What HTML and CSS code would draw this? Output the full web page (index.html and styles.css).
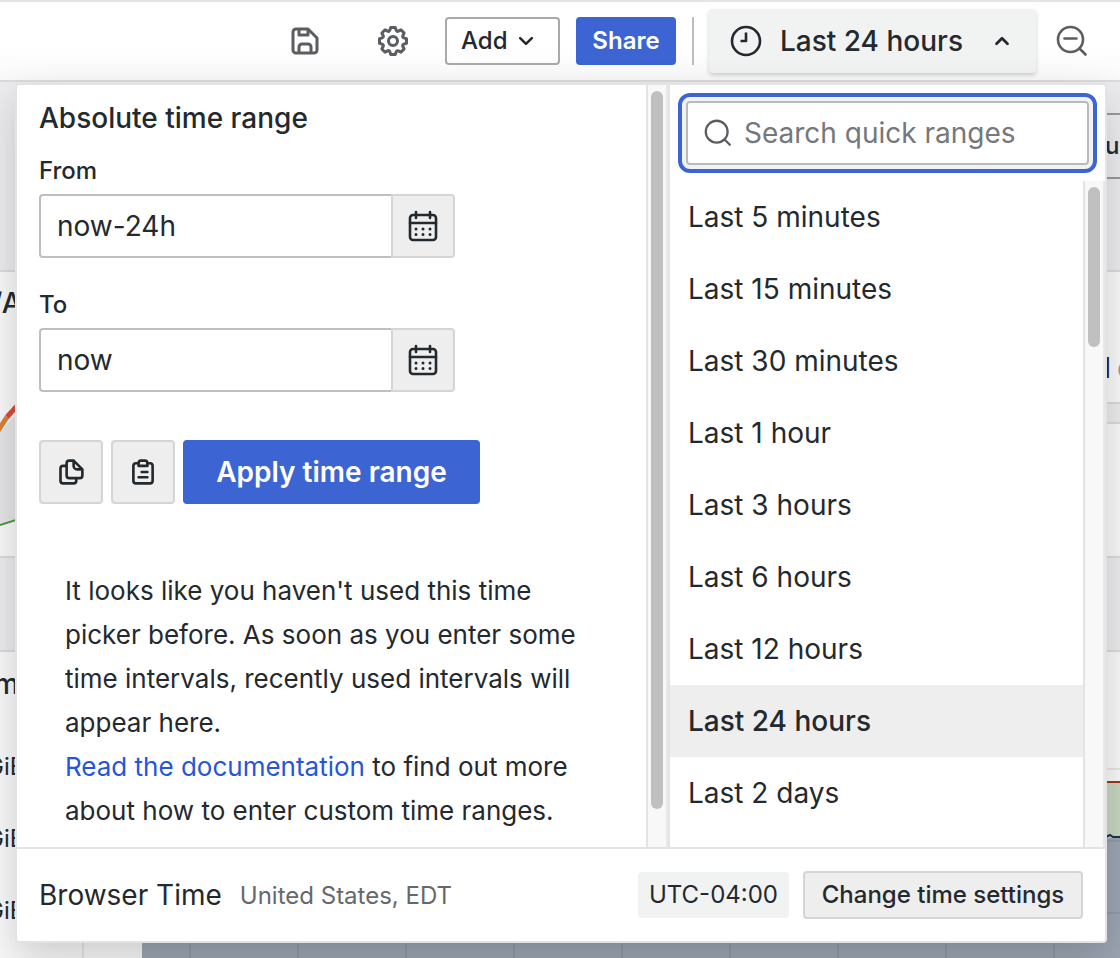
FILE: index.html
```html
<!DOCTYPE html>
<html lang="en">
<head>
<meta charset="utf-8">
<title>Dashboard time range</title>
<link rel="stylesheet" href="styles.css">
</head>
<body>
<header class="toolbar">
  <button class="icon-button" type="button" aria-label="Save dashboard">
    <svg class="icon" viewBox="0 0 24 24"><path d="M20.7 9.3l-6-6A1 1 0 0 0 14 3H6a3 3 0 0 0-3 3v12a3 3 0 0 0 3 3h12a3 3 0 0 0 3-3v-8a1 1 0 0 0-.3-.7zM9 5h4v2H9V5zm6 14H9v-3a1 1 0 0 1 1-1h4a1 1 0 0 1 1 1v3zm4-1a1 1 0 0 1-1 1h-1v-3a3 3 0 0 0-3-3h-4a3 3 0 0 0-3 3v3H6a1 1 0 0 1-1-1V6a1 1 0 0 1 1-1h1v3a1 1 0 0 0 1 1h6a1 1 0 0 0 1-1V6.400L19 10.400V18z"/></svg>
  </button>
  <button class="icon-button" type="button" aria-label="Dashboard settings">
    <svg class="icon" viewBox="0 0 24 24"><path d="M21.320 9.550l-1.890-.63.890-1.780A1 1 0 0 0 20.130 6L18 3.870a1 1 0 0 0-1.150-.19l-1.780.890-.63-1.890A1 1 0 0 0 13.500 2h-3a1 1 0 0 0-.95.680l-.63 1.890-1.780-.890A1 1 0 0 0 6 3.870L3.870 6a1 1 0 0 0-.19 1.150l.890 1.780-1.890.630a1 1 0 0 0-.680.940v3a1 1 0 0 0 .680.950l1.890.630-.890 1.780A1 1 0 0 0 3.870 18L6 20.130a1 1 0 0 0 1.150.190l1.780-.890.630 1.890a1 1 0 0 0 .95.680h3a1 1 0 0 0 .95-.680l.630-1.890 1.780.890A1 1 0 0 0 18 20.130L20.130 18a1 1 0 0 0 .190-1.150l-.890-1.780 1.890-.630A1 1 0 0 0 22 13.500v-3a1 1 0 0 0-.680-.950zM20 12.780l-1.200.4A2 2 0 0 0 17.640 16l.57 1.140-1.100 1.100L16 17.640a2 2 0 0 0-2.790 1.160l-.4 1.200h-1.590l-.4-1.200A2 2 0 0 0 8 17.640l-1.140.57-1.100-1.100L6.360 16a2 2 0 0 0-1.160-2.820L4 12.780v-1.560l1.200-.4A2 2 0 0 0 6.360 8l-.57-1.110 1.100-1.100L8 6.360a2 2 0 0 0 2.820-1.160l.4-1.200h1.560l.4 1.200A2 2 0 0 0 16 6.360l1.140-.57 1.100 1.100L17.640 8a2 2 0 0 0 1.160 2.790l1.200.4v1.590zM12 8a4 4 0 1 0 0 8 4 4 0 0 0 0-8zm0 6a2 2 0 1 1 0-4 2 2 0 0 1 0 4z"/></svg>
  </button>
  <button class="add-button" type="button">Add
    <svg class="chevron" viewBox="0 0 24 24"><path d="M5 8.500l7 7 7-7"/></svg>
  </button>
  <button class="share-button" type="button">Share</button>
  <span class="divider"></span>
  <button class="range-button" type="button" aria-expanded="true">
    <svg class="clock" viewBox="0 0 32 32"><circle cx="16" cy="16" r="14"/><path d="M16 7.500V16h-5.500"/></svg>
    <span>Last 24 hours</span>
    <svg class="chevron chevron-up" viewBox="0 0 24 24"><path d="M6 15l6-6 6 6"/></svg>
  </button>
  <button class="icon-button zoom-button" type="button" aria-label="Zoom out time range">
    <svg class="stroke-icon" viewBox="0 0 32 32"><circle cx="14.500" cy="14.500" r="12.500"/><path d="M8.500 13.500h12M23.500 23.500l6 6"/></svg>
  </button>
</header>

<main class="dashboard">
  <div class="control-row"><button class="hidden-control" type="button">u</button></div>
  <div class="panel-row">
    <section class="panel gauge-panel">
      <h2 class="panel-title">/A</h2>
      <svg class="gauge" viewBox="0 0 16 284"><path d="M0 152Q7 142 16 134V238L0 243z" fill="#e6e6e8"/><path class="gauge-warn" d="M-2 150L7 136"/><path class="gauge-high" d="M7 136L17 125"/><path class="trend" d="M0 244l16-5"/></svg>
    </section>
    <div class="stat-column">
      <section class="panel stat-panel"><span>l</span><span class="faded">c</span></section>
      <section class="panel stat-panel stat-panel-tall"></section>
    </div>
  </div>
  <section class="panel memory-panel">
    <h2 class="panel-title memory-title">m</h2>
    <div class="axis-label">GiB</div>
    <div class="axis-label">GiB</div>
    <div class="axis-label">GiB</div>
    <svg class="chart" viewBox="0 0 1120 306" preserveAspectRatio="xMaxYMin slice">
      <path class="chart-grid" d="M83 117h1037M83 0v306"/>
      <path fill="#c7d6c0" d="M142 130h978v56H142z"/>
      <path fill="#9ca5b3" d="M142 186h978v120H142z"/>
      <path class="chart-limit" d="M142 130h978"/>
      <path class="chart-line" d="M142 185h964l4-2 3 2h7"/>
      <path class="chart-grid" d="M83 189h1037M83 261h1037M190 189v117M298 189v117M406 189v117M514 189v117M622 189v117M730 189v117M838 189v117M946 189v117M1054 189v117"/>
    </svg>
  </section>

  <section class="picker" aria-label="Time range picker">
    <div class="picker-body">
      <form class="absolute-range">
        <h1 class="picker-title">Absolute time range</h1>
        <label class="field-label" for="from">From</label>
        <div class="field">
          <input class="field-input" id="from" type="text" value="now-24h">
          <button class="field-button" type="button" aria-label="Open calendar for start">
            <svg class="stroke-icon calendar" viewBox="0 0 32 32"><rect x="3" y="5" width="26" height="25" rx="3"/><path d="M3 13h26M9 2v6M23 2v6"/><path class="dots" d="M9 19h.01M16 19h.01M23 19h.01M9 24.500h.01M16 24.500h.01M23 24.500h.01"/></svg>
          </button>
        </div>
        <label class="field-label" for="to">To</label>
        <div class="field">
          <input class="field-input" id="to" type="text" value="now">
          <button class="field-button" type="button" aria-label="Open calendar for end">
            <svg class="stroke-icon calendar" viewBox="0 0 32 32"><rect x="3" y="5" width="26" height="25" rx="3"/><path d="M3 13h26M9 2v6M23 2v6"/><path class="dots" d="M9 19h.01M16 19h.01M23 19h.01M9 24.500h.01M16 24.500h.01M23 24.500h.01"/></svg>
          </button>
        </div>
        <div class="actions">
          <button class="square-button" type="button" aria-label="Copy time range">
            <svg class="stroke-icon" viewBox="0 0 32 32"><path d="M19 3h-5a3 3 0 0 0-3 3v14a3 3 0 0 0 3 3h12a3 3 0 0 0 3-3v-7zM19 3v6a4 4 0 0 0 4 4h6M11 9H7a3 3 0 0 0-3 3v14a3 3 0 0 0 3 3h12a3 3 0 0 0 3-3v-3"/></svg>
          </button>
          <button class="square-button" type="button" aria-label="Paste time range">
            <svg class="stroke-icon" viewBox="0 0 32 32"><path d="M11 6H8a3 3 0 0 0-3 3v17a3 3 0 0 0 3 3h16a3 3 0 0 0 3-3V9a3 3 0 0 0-3-3h-3"/><path d="M11 5.500a2.500 2.500 0 0 1 2.500-2.500h5a2.500 2.500 0 0 1 2.500 2.500V9H11zM14.500 16h6.500M11 22h10"/></svg>
          </button>
          <button class="apply-button" type="submit">Apply time range</button>
        </div>
        <p class="hint">It looks like you haven't used this time picker before. As soon as you enter some time intervals, recently used intervals will appear here.<br><a class="hint-link" href="#docs">Read the documentation</a> to find out more about how to enter custom time ranges.</p>
      </form>
      <div class="scroll-track scroll-left"><span class="scroll-thumb"></span></div>
      <div class="quick-ranges">
        <div class="search-wrap">
          <div class="search">
            <svg class="stroke-icon search-icon" viewBox="0 0 32 32"><circle cx="14.500" cy="14.500" r="12.500"/><path d="M23.500 23.500l6 6"/></svg>
            <input class="search-input" type="text" placeholder="Search quick ranges" aria-label="Search quick ranges">
          </div>
        </div>
        <div class="range-area">
          <ul class="range-list">
            <li><button class="range-item" type="button">Last 5 minutes</button></li>
            <li><button class="range-item" type="button">Last 15 minutes</button></li>
            <li><button class="range-item" type="button">Last 30 minutes</button></li>
            <li><button class="range-item" type="button">Last 1 hour</button></li>
            <li><button class="range-item" type="button">Last 3 hours</button></li>
            <li><button class="range-item" type="button">Last 6 hours</button></li>
            <li><button class="range-item" type="button">Last 12 hours</button></li>
            <li><button class="range-item range-item-active" type="button">Last 24 hours</button></li>
            <li><button class="range-item" type="button">Last 2 days</button></li>
          </ul>
          <div class="scroll-track scroll-right"><span class="scroll-thumb"></span></div>
        </div>
      </div>
    </div>
    <footer class="picker-footer">
      <span class="zone-name">Browser Time</span>
      <span class="zone-place">United States, EDT</span>
      <span class="zone-offset">UTC-04:00</span>
      <button class="settings-button" type="button">Change time settings</button>
    </footer>
  </section>
</main>
</body>
</html>
```
FILE: styles.css
```css
* {
  box-sizing: border-box;
}

body {
  display: flex;
  flex-direction: column;
  min-height: 100vh;
  margin: 0;
  overflow: hidden;
  color: #24292e;
  background: #f4f5f5;
  font: 400 28px/44px Inter, "Liberation Sans", sans-serif;
}

button,
input {
  margin: 0;
  padding: 0;
  border: 0;
  color: inherit;
  background: none;
  font: inherit;
}

button {
  display: flex;
  align-items: center;
  justify-content: center;
}

svg {
  display: block;
}

.icon {
  flex: none;
  width: 36px;
  height: 36px;
  fill: #5b5d61;
}

.stroke-icon,
.chevron,
.clock {
  flex: none;
  width: 32px;
  height: 32px;
  fill: none;
  stroke: currentColor;
  stroke-width: 2.6;
  stroke-linecap: round;
  stroke-linejoin: round;
}

.toolbar {
  display: flex;
  flex: none;
  align-items: center;
  justify-content: flex-end;
  height: 82px;
  padding-right: 32px;
  border-top: 2px solid #e4e4e5;
  border-bottom: 2px solid #dcdcdd;
  background: linear-gradient(#ffffff 50%, #fafafa);
}

.icon-button {
  width: 32px;
  height: 48px;
  margin-right: 56px;
}

.add-button,
.share-button {
  height: 48px;
  border-radius: 4px;
  font-size: 24px;
  font-weight: 500;
}

.add-button {
  justify-content: flex-start;
  width: 115px;
  gap: 8px;
  margin-left: -20px;
  padding-left: 14px;
  border: 2px solid #a9a9aa;
}

.add-button .chevron {
  width: 20px;
  height: 20px;
  stroke-width: 3;
}

.share-button {
  width: 100px;
  margin-left: 16px;
  color: #ffffff;
  background: #3d64d3;
  font-weight: 600;
}

.divider {
  width: 2px;
  height: 48px;
  margin: 0 15px 0 16px;
  background: #bdbdbe;
}

.range-button {
  justify-content: flex-start;
  width: 327px;
  height: 64px;
  padding-left: 21px;
  gap: 18px;
  border-radius: 4px;
  background: #f1f3f3;
  box-shadow: 0 2px 4px rgba(0, 0, 0, 0.18);
  font-weight: 500;
}

.clock {
  stroke-linecap: butt;
}

.chevron-up {
  width: 22px;
  height: 22px;
  margin-left: 10px;
  stroke-width: 3;
}

.zoom-button {
  margin: 0 0 0 20px;
  color: #5b5d61;
}

.dashboard {
  display: flex;
  position: relative;
  flex: 1;
  flex-direction: column;
  background: #ededef;
}

.control-row {
  display: flex;
  justify-content: flex-end;
  height: 188px;
  padding-top: 31px;
}

.hidden-control {
  justify-content: flex-start;
  width: 36px;
  height: 66px;
  padding-left: 19px;
  border: 2px solid #99999b;
  border-right: 0;
  font-size: 24px;
  font-weight: 500;
}

.panel {
  border: 2px solid #dcdcdd;
  background: #fafafa;
}

.panel-row {
  display: flex;
  justify-content: space-between;
  height: 288px;
}

.gauge-panel {
  width: 50%;
  border-left: 0;
}

.panel-title {
  margin: 0;
  font-size: 28px;
  font-weight: 500;
}

.gauge-panel .panel-title {
  height: 0;
  padding-top: 9px;
  text-indent: -8px;
}

.gauge {
  width: 16px;
  height: 284px;
  fill: none;
  stroke-width: 5;
}

.gauge-warn {
  stroke: #da8136;
}

.gauge-high {
  stroke: #d94b3a;
}

.trend {
  stroke: #4b9a3e;
  stroke-width: 2;
}

.stat-column {
  display: flex;
  flex-direction: column;
  gap: 18px;
  width: 40%;
}

.stat-panel {
  display: flex;
  justify-content: flex-end;
  height: 134px;
  padding-top: 74px;
  gap: 6px;
  border-right: 0;
}

.stat-panel-tall {
  flex: 1;
}

.faded {
  width: 3px;
  color: #999999;
}

.memory-panel {
  position: relative;
  flex: 1;
  margin-top: 92px;
  border-width: 2px 0 0;
}

.memory-title {
  height: 79px;
  padding-top: 10px;
  text-indent: -6px;
}

.axis-label {
  height: 72px;
  padding-top: 14px;
  font-size: 24px;
  text-indent: -14px;
}

.chart {
  position: absolute;
  inset: 0;
  width: 100%;
  height: 100%;
  fill: none;
}

.chart-grid {
  stroke: rgba(60, 65, 75, 0.2);
  stroke-width: 1;
}

.chart-limit {
  stroke: #a83214;
  stroke-width: 2;
}

.chart-line {
  stroke: #1d3348;
  stroke-width: 2;
}

.picker {
  display: flex;
  position: absolute;
  top: 1px;
  right: 13px;
  left: 15px;
  flex-direction: column;
  border: 2px solid #e3e3e4;
  border-radius: 4px;
  background: #ffffff;
  box-shadow: 0 16px 40px rgba(24, 26, 27, 0.2);
}

.picker-body {
  display: flex;
  height: 762px;
}

.absolute-range {
  flex: 1;
  min-width: 0;
  padding: 11px 0 0 22px;
}

.picker-title {
  margin: 0 0 14px;
  font-size: 28px;
  font-weight: 500;
  line-height: 44px;
}

.field-label {
  display: block;
  margin-bottom: 6px;
  font-size: 24px;
  font-weight: 500;
  line-height: 34px;
}

.field {
  display: flex;
  width: 416px;
  height: 64px;
  margin-bottom: 30px;
}

.field-input {
  flex: 1;
  min-width: 0;
  padding: 0 16px;
  border: 2px solid #bfbfc0;
  border-right: 0;
  border-radius: 4px 0 0 4px;
}

.field-button {
  width: 64px;
  border: 2px solid #d5d5d6;
  border-radius: 0 4px 4px 0;
  background: #eeeeee;
}

.dots {
  stroke-width: 3;
}

.actions {
  display: flex;
  gap: 8px;
  margin-top: 48px;
}

.square-button {
  width: 64px;
  height: 64px;
  border: 2px solid #d5d5d6;
  border-radius: 4px;
  background: #eeeeee;
}

.square-button .stroke-icon {
  width: 28px;
  height: 28px;
  stroke-width: 3;
}

.apply-button {
  width: 297px;
  height: 64px;
  border-radius: 4px;
  color: #ffffff;
  background: #3d64d3;
  font-weight: 600;
}

.hint {
  max-width: 530px;
  margin: 65px 0 0 26px;
  font-size: 26px;
}

.hint-link {
  color: #2755d9;
  text-decoration: none;
}

.scroll-track {
  display: flex;
  flex: none;
  justify-content: center;
  width: 22px;
  padding-top: 6px;
  border-right: 2px solid #e8e8e8;
  border-left: 2px solid #e3e3e3;
  background: #f8f8f8;
}

.scroll-thumb {
  width: 12px;
  height: 160px;
  border-radius: 6px;
  background: #c0c0c0;
}

.scroll-left .scroll-thumb {
  height: 718px;
}

.quick-ranges {
  display: flex;
  flex-direction: column;
  width: 437px;
  border-left: 2px solid #e3e3e4;
}

.search-wrap {
  padding: 16px;
}

.search {
  display: flex;
  align-items: center;
  height: 64px;
  padding: 0 16px;
  gap: 12px;
  border: 2px solid #bababb;
  border-radius: 4px;
  outline: 4px solid #3d64d3;
  outline-offset: 4px;
  box-shadow: 0 0 0 4px #f1f3f3;
}

.search-icon {
  width: 28px;
  height: 28px;
  color: #5b5d61;
}

.search-input {
  flex: 1;
  min-width: 0;
  outline: 0;
}

.search-input::placeholder {
  color: #75777b;
  opacity: 1;
}

.range-area {
  display: flex;
  flex: 1;
}

.range-list {
  flex: 1;
  margin: 0;
  padding: 0;
  list-style: none;
}

.range-item {
  justify-content: flex-start;
  width: 100%;
  height: 72px;
  padding-left: 18px;
}

.range-item-active {
  background: #eeeeee;
  font-weight: 500;
}

.picker-footer {
  display: flex;
  align-items: center;
  height: 94px;
  padding: 0 22px;
  border-top: 2px solid #e3e3e4;
}

.zone-place {
  margin-left: 18px;
  padding-top: 2px;
  color: #66686b;
  font-size: 24px;
}

.zone-offset {
  margin-left: auto;
  padding: 1px 11px;
  border-radius: 4px;
  background: #f1f3f3;
  font-size: 24px;
}

.settings-button {
  width: 280px;
  height: 48px;
  margin-left: 14px;
  border: 2px solid #d5d5d6;
  border-radius: 4px;
  background: #eeeeee;
  font-size: 24px;
  font-weight: 500;
}
```
